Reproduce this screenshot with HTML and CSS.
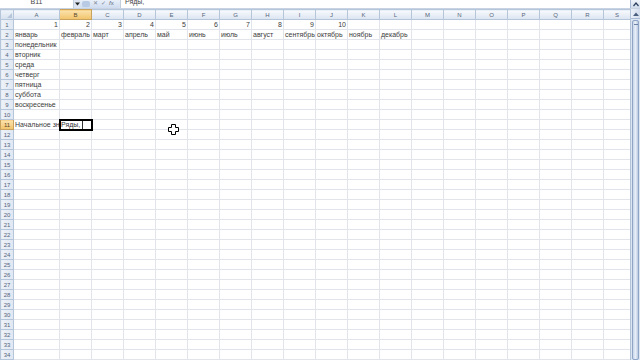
FILE: index.html
```html
<!DOCTYPE html>
<html lang="ru">
<head>
<meta charset="utf-8">
<title>Excel</title>
<link rel="stylesheet" href="styles.css">
</head>
<body>
<div class="app">
  <div class="fbar">
    <div class="namebox"><span class="nb-text">B11</span></div>
    <div class="nb-drop"><svg width="5" height="4" viewBox="0 0 5 4"><path d="M0 0.5 H5 L2.5 3.5 Z" fill="#222"/></svg></div>
    <div class="fb-tools">
      <span class="grip"></span>
      <span class="tool x">&#x2715;</span>
      <span class="tool ok">&#x2713;</span>
      <span class="tool fx"><i>f</i>x</span>
    </div>
    <div class="fb-input"><span class="fb-text">Ряды,</span></div>
    <div class="fb-expand"><svg width="6" height="5" viewBox="0 0 6 5"><path d="M0.5 4 L3 1 L5.5 4" fill="none" stroke="#2a3f5f" stroke-width="1.2"/></svg></div>
  </div>
  <div class="main">
    <div class="sheet">
      <table class="grid">
        <colgroup>
          <col class="c-rh"><col class="c-a">
          <col class="c-n"><col class="c-n"><col class="c-n"><col class="c-n"><col class="c-n"><col class="c-n"><col class="c-n"><col class="c-n"><col class="c-n"><col class="c-n"><col class="c-n"><col class="c-n"><col class="c-n"><col class="c-n"><col class="c-n"><col class="c-n"><col class="c-n">
          <col class="c-s">
        </colgroup>
        <thead>
          <tr><th class="corner"><span class="tri"></span></th><th>A</th><th class="sel">B</th><th>C</th><th>D</th><th>E</th><th>F</th><th>G</th><th>H</th><th>I</th><th>J</th><th>K</th><th>L</th><th>M</th><th>N</th><th>O</th><th>P</th><th>Q</th><th>R</th><th>S</th></tr>
        </thead>
        <tbody>
          <tr><th>1</th><td class="num">1</td><td class="num">2</td><td class="num">3</td><td class="num">4</td><td class="num">5</td><td class="num">6</td><td class="num">7</td><td class="num">8</td><td class="num">9</td><td class="num">10</td><td></td><td></td><td></td><td></td><td></td><td></td><td></td><td></td><td></td></tr>
          <tr><th>2</th><td>январь</td><td>февраль</td><td>март</td><td>апрель</td><td>май</td><td>июнь</td><td>июль</td><td>август</td><td>сентябрь</td><td>октябрь</td><td>ноябрь</td><td>декабрь</td><td></td><td></td><td></td><td></td><td></td><td></td><td></td></tr>
          <tr><th>3</th><td>понедельник</td><td></td><td></td><td></td><td></td><td></td><td></td><td></td><td></td><td></td><td></td><td></td><td></td><td></td><td></td><td></td><td></td><td></td><td></td></tr>
          <tr><th>4</th><td>вторник</td><td></td><td></td><td></td><td></td><td></td><td></td><td></td><td></td><td></td><td></td><td></td><td></td><td></td><td></td><td></td><td></td><td></td><td></td></tr>
          <tr><th>5</th><td>среда</td><td></td><td></td><td></td><td></td><td></td><td></td><td></td><td></td><td></td><td></td><td></td><td></td><td></td><td></td><td></td><td></td><td></td><td></td></tr>
          <tr><th>6</th><td>четверг</td><td></td><td></td><td></td><td></td><td></td><td></td><td></td><td></td><td></td><td></td><td></td><td></td><td></td><td></td><td></td><td></td><td></td><td></td></tr>
          <tr><th>7</th><td>пятница</td><td></td><td></td><td></td><td></td><td></td><td></td><td></td><td></td><td></td><td></td><td></td><td></td><td></td><td></td><td></td><td></td><td></td><td></td></tr>
          <tr><th>8</th><td>суббота</td><td></td><td></td><td></td><td></td><td></td><td></td><td></td><td></td><td></td><td></td><td></td><td></td><td></td><td></td><td></td><td></td><td></td><td></td></tr>
          <tr><th>9</th><td>воскресенье</td><td></td><td></td><td></td><td></td><td></td><td></td><td></td><td></td><td></td><td></td><td></td><td></td><td></td><td></td><td></td><td></td><td></td><td></td></tr>
          <tr><th>10</th><td></td><td></td><td></td><td></td><td></td><td></td><td></td><td></td><td></td><td></td><td></td><td></td><td></td><td></td><td></td><td></td><td></td><td></td><td></td></tr>
          <tr><th class="sel">11</th><td>Начальное значение</td><td class="active"><span class="edit">Ряды,</span></td><td></td><td></td><td></td><td></td><td></td><td></td><td></td><td></td><td></td><td></td><td></td><td></td><td></td><td></td><td></td><td></td><td></td></tr>
          <tr><th>12</th><td></td><td></td><td></td><td></td><td></td><td></td><td></td><td></td><td></td><td></td><td></td><td></td><td></td><td></td><td></td><td></td><td></td><td></td><td></td></tr>
          <tr><th>13</th><td></td><td></td><td></td><td></td><td></td><td></td><td></td><td></td><td></td><td></td><td></td><td></td><td></td><td></td><td></td><td></td><td></td><td></td><td></td></tr>
          <tr><th>14</th><td></td><td></td><td></td><td></td><td></td><td></td><td></td><td></td><td></td><td></td><td></td><td></td><td></td><td></td><td></td><td></td><td></td><td></td><td></td></tr>
          <tr><th>15</th><td></td><td></td><td></td><td></td><td></td><td></td><td></td><td></td><td></td><td></td><td></td><td></td><td></td><td></td><td></td><td></td><td></td><td></td><td></td></tr>
          <tr><th>16</th><td></td><td></td><td></td><td></td><td></td><td></td><td></td><td></td><td></td><td></td><td></td><td></td><td></td><td></td><td></td><td></td><td></td><td></td><td></td></tr>
          <tr><th>17</th><td></td><td></td><td></td><td></td><td></td><td></td><td></td><td></td><td></td><td></td><td></td><td></td><td></td><td></td><td></td><td></td><td></td><td></td><td></td></tr>
          <tr><th>18</th><td></td><td></td><td></td><td></td><td></td><td></td><td></td><td></td><td></td><td></td><td></td><td></td><td></td><td></td><td></td><td></td><td></td><td></td><td></td></tr>
          <tr><th>19</th><td></td><td></td><td></td><td></td><td></td><td></td><td></td><td></td><td></td><td></td><td></td><td></td><td></td><td></td><td></td><td></td><td></td><td></td><td></td></tr>
          <tr><th>20</th><td></td><td></td><td></td><td></td><td></td><td></td><td></td><td></td><td></td><td></td><td></td><td></td><td></td><td></td><td></td><td></td><td></td><td></td><td></td></tr>
          <tr><th>21</th><td></td><td></td><td></td><td></td><td></td><td></td><td></td><td></td><td></td><td></td><td></td><td></td><td></td><td></td><td></td><td></td><td></td><td></td><td></td></tr>
          <tr><th>22</th><td></td><td></td><td></td><td></td><td></td><td></td><td></td><td></td><td></td><td></td><td></td><td></td><td></td><td></td><td></td><td></td><td></td><td></td><td></td></tr>
          <tr><th>23</th><td></td><td></td><td></td><td></td><td></td><td></td><td></td><td></td><td></td><td></td><td></td><td></td><td></td><td></td><td></td><td></td><td></td><td></td><td></td></tr>
          <tr><th>24</th><td></td><td></td><td></td><td></td><td></td><td></td><td></td><td></td><td></td><td></td><td></td><td></td><td></td><td></td><td></td><td></td><td></td><td></td><td></td></tr>
          <tr><th>25</th><td></td><td></td><td></td><td></td><td></td><td></td><td></td><td></td><td></td><td></td><td></td><td></td><td></td><td></td><td></td><td></td><td></td><td></td><td></td></tr>
          <tr><th>26</th><td></td><td></td><td></td><td></td><td></td><td></td><td></td><td></td><td></td><td></td><td></td><td></td><td></td><td></td><td></td><td></td><td></td><td></td><td></td></tr>
          <tr><th>27</th><td></td><td></td><td></td><td></td><td></td><td></td><td></td><td></td><td></td><td></td><td></td><td></td><td></td><td></td><td></td><td></td><td></td><td></td><td></td></tr>
          <tr><th>28</th><td></td><td></td><td></td><td></td><td></td><td></td><td></td><td></td><td></td><td></td><td></td><td></td><td></td><td></td><td></td><td></td><td></td><td></td><td></td></tr>
          <tr><th>29</th><td></td><td></td><td></td><td></td><td></td><td></td><td></td><td></td><td></td><td></td><td></td><td></td><td></td><td></td><td></td><td></td><td></td><td></td><td></td></tr>
          <tr><th>30</th><td></td><td></td><td></td><td></td><td></td><td></td><td></td><td></td><td></td><td></td><td></td><td></td><td></td><td></td><td></td><td></td><td></td><td></td><td></td></tr>
          <tr><th>31</th><td></td><td></td><td></td><td></td><td></td><td></td><td></td><td></td><td></td><td></td><td></td><td></td><td></td><td></td><td></td><td></td><td></td><td></td><td></td></tr>
          <tr><th>32</th><td></td><td></td><td></td><td></td><td></td><td></td><td></td><td></td><td></td><td></td><td></td><td></td><td></td><td></td><td></td><td></td><td></td><td></td><td></td></tr>
          <tr><th>33</th><td></td><td></td><td></td><td></td><td></td><td></td><td></td><td></td><td></td><td></td><td></td><td></td><td></td><td></td><td></td><td></td><td></td><td></td><td></td></tr>
          <tr><th>34</th><td></td><td></td><td></td><td></td><td></td><td></td><td></td><td></td><td></td><td></td><td></td><td></td><td></td><td></td><td></td><td></td><td></td><td></td><td></td></tr>
          <tr><th>35</th><td></td><td></td><td></td><td></td><td></td><td></td><td></td><td></td><td></td><td></td><td></td><td></td><td></td><td></td><td></td><td></td><td></td><td></td><td></td></tr>
        </tbody>
      </table>
      <svg class="cursor" width="11" height="11" viewBox="0 0 11 11"><path d="M3.5 0.5 H7.5 V3.5 H10.5 V7.5 H7.5 V10.5 H3.5 V7.5 H0.5 V3.5 H3.5 Z" fill="#fff" stroke="#000" stroke-width="1"/></svg>
    </div>
    <div class="vscroll">
      <div class="vs-btn"><svg width="6" height="4" viewBox="0 0 6 4"><path d="M0 4 L3 0.5 L6 4 Z" fill="#4a5f80"/></svg></div>
      <div class="vs-thumb"><span class="grip-line"></span></div>
    </div>
  </div>
</div>
</body>
</html>
```

FILE: styles.css
```css
* { box-sizing: border-box; }
html, body { margin: 0; padding: 0; }
body {
  width: 640px;
  height: 360px;
  overflow: hidden;
  background: #ffffff;
  font-family: "Liberation Sans", Arial, sans-serif;
  font-size: 7px;
  color: #3c3c3c;
}
.app { display: flex; flex-direction: column; height: 360px; }

/* formula bar (only bottom part visible) */
.fbar {
  height: 9px;
  display: flex;
  align-items: flex-end;
  background: #dbe4f0;
  border-bottom: 1px solid #c7d3e3;
  overflow: hidden;
  flex: none;
}
.namebox {
  width: 74px;
  height: 8px;
  background: #fff;
  border-right: 1px solid #c3cedd;
  display: flex;
  justify-content: center;
  align-items: flex-end;
  overflow: hidden;
}
.nb-text { line-height: 8px; margin-bottom: 2px; color: #444; }
.nb-drop { width: 6px; height: 8px; display: flex; align-items: center; justify-content: center; }
.fb-tools {
  width: 40px;
  height: 8px;
  display: flex;
  align-items: flex-end;
  gap: 3px;
  padding-left: 2px;
  background: linear-gradient(#e9f0f9, #cfdcef);
  border-radius: 0 0 3px 3px;
  overflow: hidden;
}
.grip { width: 8px; height: 6px; margin-bottom: 1px; background: #b9cbe4; border-radius: 2px; }
.tool { line-height: 7px; color: #7d8898; font-size: 6px; margin-bottom: 1px; }
.tool.fx { font-size: 6px; color: #5f6b7c; }
.fb-input {
  flex: 1;
  height: 8px;
  background: #fff;
  border-left: 1px solid #c3cedd;
  padding-left: 4px;
  display: flex;
  align-items: flex-end;
  overflow: hidden;
}
.fb-text { line-height: 8px; margin-bottom: 2px; color: #444; }
.fb-expand {
  width: 10px;
  height: 8px;
  background: linear-gradient(#eef3fa, #cfdbec);
  border-left: 1px solid #a8bad3;
  display: flex;
  align-items: center;
  justify-content: center;
}

/* sheet */
.main { flex: 1; display: flex; min-height: 0; }
.sheet { width: 630px; overflow: hidden; position: relative; }
.grid {
  border-collapse: collapse;
  table-layout: fixed;
  width: 630px;
}
.c-rh { width: 13px; }
.c-a { width: 46px; }
.c-n { width: 32px; }
.c-s { width: 27px; }
.grid th, .grid td {
  height: 10px;
  padding: 0 1px;
  border: 1px solid #e1e4ea;
  white-space: nowrap;
  overflow: hidden;
  line-height: 8px;
  font-weight: normal;
  text-align: left;
  vertical-align: bottom;
}
.grid thead th {
  background: linear-gradient(#f7f9fc, #dbe4f1);
  border-color: #b5c5da;
  color: #56657a;
  text-align: center;
  font-size: 6px;
  vertical-align: middle;
}
.grid tbody th {
  background: linear-gradient(90deg, #eef2f8, #dfe7f2);
  border-color: #b5c5da;
  color: #56657a;
  text-align: center;
  font-size: 6px;
  vertical-align: middle;
  padding: 0;
}
.grid thead th.sel, .grid tbody th.sel {
  background: linear-gradient(#fbe2ad, #f2c36a);
  border-color: #c9a35d;
  color: #5a4a2a;
}
.grid th.corner { position: relative; background: linear-gradient(#eef3f9, #d6e0ee); }
.tri {
  position: absolute;
  right: 1px;
  bottom: 1px;
  width: 0;
  height: 0;
  border-left: 5px solid transparent;
  border-bottom: 5px solid #b6c5d9;
}
.grid td.num { text-align: right; }
.grid td.active {
  outline: 2px solid #000;
  outline-offset: -1px;
  padding-left: 1px;
}
.edit {
  display: inline-block;
  width: 22px;
  height: 8px;
  border-right: 1px solid #333;
  color: #333;
}
.cursor { position: absolute; left: 168px; top: 115px; }

/* scrollbar */
.vscroll {
  width: 10px;
  display: flex;
  flex-direction: column;
  background: #dce6f3;
  border-left: 1px solid #b3c3d8;
}
.vs-btn {
  height: 10px;
  display: flex;
  align-items: center;
  justify-content: center;
  background: linear-gradient(90deg, #eaf0f8, #d2ddec);
  border-bottom: 1px solid #a8bad3;
}
.vs-thumb {
  flex: 1;
  margin: 1px 1px 0 1px;
  background: linear-gradient(90deg, #c8d6ea, #e8eef7 50%, #b9cae2);
  border: 1px solid #8ea5c6;
  border-radius: 2px;
  display: flex;
  justify-content: center;
  padding-top: 3px;
}
.grip-line { width: 4px; height: 1px; background: #6c83a6; }
```
